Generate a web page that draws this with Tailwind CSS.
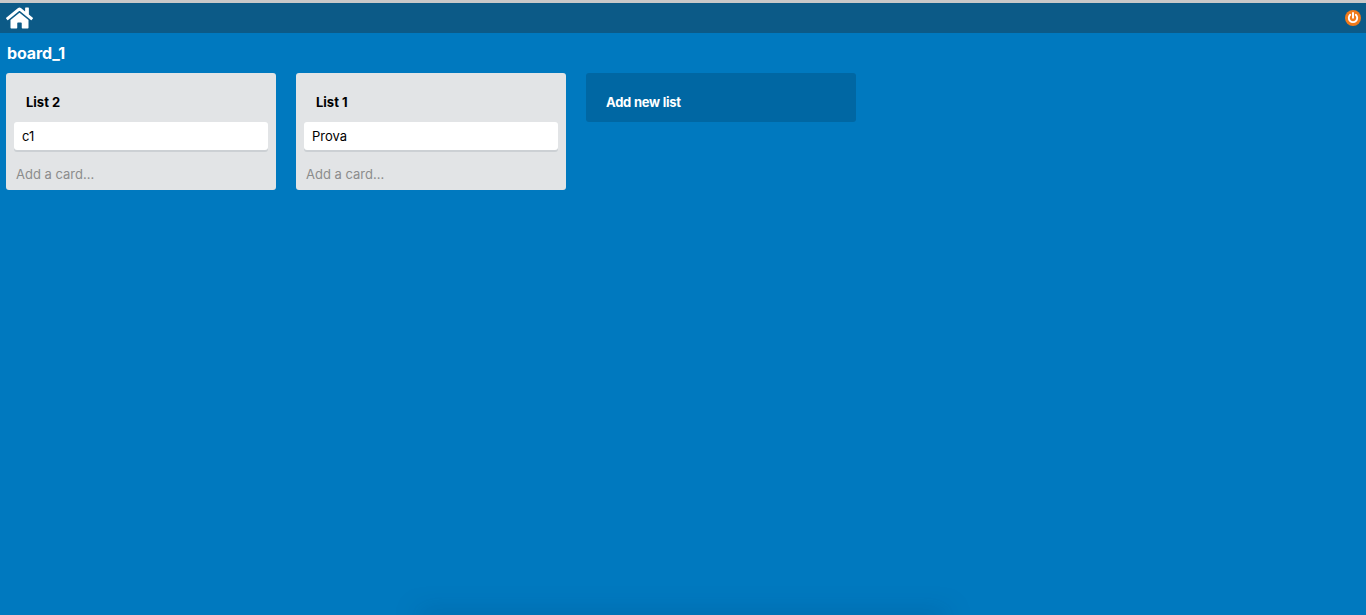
<!DOCTYPE html>
<html lang="en">
<head>
    <meta charset="UTF-8">
    <title>board_1</title>
    <script src="https://cdn.jsdelivr.net/npm/@tailwindcss/browser@4"></script>
</head>
<body class="relative h-[615px] overflow-hidden bg-[#0079bf] font-['Inter','Roboto',sans-serif] text-black">
    <!-- Window edge -->
    <div class="h-[3px] bg-[#c9c9c9]"></div>

    <!-- Navbar -->
    <nav class="flex h-[30px] items-center justify-between bg-[#0c5a87] pl-[6px] pr-[5px]">
        <svg class="h-6 w-[27px] text-white" viewBox="0 0 576 512" fill="currentColor">
            <path d="M280.37 148.26L96 300.11V464a16 16 0 0 0 16 16l112.06-.29a16 16 0 0 0 15.92-16V368a16 16 0 0 1 16-16h64a16 16 0 0 1 16 16v95.64a16 16 0 0 0 16 16.05L464 480a16 16 0 0 0 16-16V300L295.67 148.26a12.19 12.19 0 0 0-15.3 0zM571.6 251.47L488 182.56V44.05a12 12 0 0 0-12-12h-56a12 12 0 0 0-12 12v72.61L318.47 43a48 48 0 0 0-61 0L4.34 251.47a12 12 0 0 0-1.6 16.9l25.5 31A12 12 0 0 0 45.15 301l235.22-193.74a12.19 12.19 0 0 1 15.3 0L530.9 301a12 12 0 0 0 16.9-1.6l25.5-31a12 12 0 0 0-1.7-16.93z"/>
        </svg>
        <svg class="h-4 w-4" viewBox="0 0 16 16" fill="none">
            <circle cx="8" cy="8" r="8" fill="#f07a1a"/>
            <path d="M5.2 4.8a4.2 4.2 0 1 0 5.6 0" stroke="#fff" stroke-width="1.9" stroke-linecap="round"/>
            <path d="M8 3v4.8" stroke="#fff" stroke-width="1.9" stroke-linecap="round"/>
        </svg>
    </nav>

    <!-- Board -->
    <main class="px-[6px]">
        <h1 class="mt-[10px] h-[20px] pl-px text-base leading-[20px] font-bold tracking-[-0.1px] text-white">board_1</h1>

        <div class="mt-[10px] flex items-start gap-5">
            <section class="w-[270px] rounded-[3px] bg-[#e2e4e6] px-2">
                <h2 class="h-[49px] pt-[20px] pl-3 text-[13px] leading-[18px] font-bold">List 2</h2>
                <div class="h-7 rounded-[3px] bg-white pl-2 text-[13px] leading-7 shadow-[0_2px_0_#ccd0d4]">c1</div>
                <p class="h-[40px] pt-[15px] pl-[2px] text-[13px] leading-[18px] text-[#8c8c8c]">Add a card...</p>
            </section>

            <section class="w-[270px] rounded-[3px] bg-[#e2e4e6] px-2">
                <h2 class="h-[49px] pt-[20px] pl-3 text-[13px] leading-[18px] font-bold">List 1</h2>
                <div class="h-7 rounded-[3px] bg-white pl-2 text-[13px] leading-7 shadow-[0_2px_0_#ccd0d4]">Prova</div>
                <p class="h-[40px] pt-[15px] pl-[2px] text-[13px] leading-[18px] text-[#8c8c8c]">Add a card...</p>
            </section>

            <section class="h-[49px] w-[270px] rounded-[3px] bg-[#0067a3] pt-[20px] pl-5 text-[13px] leading-[18px] font-bold tracking-[-0.25px] text-white">Add new list</section>
        </div>
    </main>

    <!-- Shadow at the bottom edge -->
    <div class="pointer-events-none absolute right-[420px] -bottom-1 left-[420px] h-1 shadow-[0_0_24px_rgba(0,40,80,0.55)]"></div>
</body>
</html>
